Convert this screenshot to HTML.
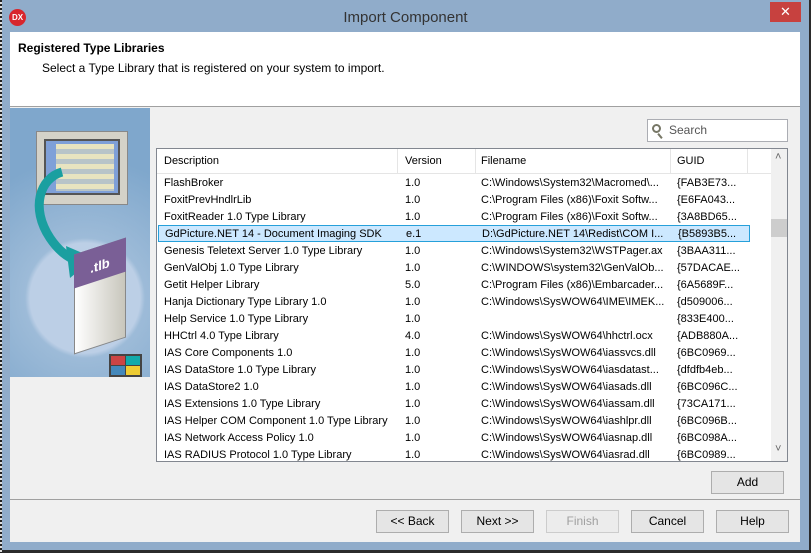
<!DOCTYPE html>
<html><head><style>
*{margin:0;padding:0;box-sizing:border-box}
body{width:811px;height:553px;background:#2b2b2b;position:relative;overflow:hidden;font-family:"Liberation Sans",sans-serif;font-size:11px;color:#000}
.a{position:absolute}
.btn{position:absolute;height:23px;border:1px solid #adadad;background:#e5e5e5;text-align:center;line-height:21px;font-size:12px}
.row{position:absolute;left:0;height:17px;line-height:18px;white-space:nowrap;width:614px}
.row span{position:absolute;top:0}
</style></head><body>
<div class="a" style="left:2px;top:0;width:807px;height:550px;background:#90acca"></div>
<div class="a" style="left:0;top:0;width:2px;height:553px;background:repeating-linear-gradient(#222 0 2px,#ddd 2px 4px)"></div>
<div class="a" style="left:9px;top:9px;width:17px;height:17px;border-radius:50%;background:#d8262d;color:#fff;font-size:8px;font-weight:bold;text-align:center;line-height:17px">DX</div>
<div class="a" style="left:0;top:9px;width:811px;text-align:center;font-size:15px;color:#333">Import Component</div>
<div class="a" style="left:770px;top:2px;width:31px;height:20px;background:#c7413f;color:#fff;text-align:center;font-size:13px;line-height:20px">✕</div>
<div class="a" style="left:10px;top:32px;width:790px;height:510px;background:#f0f0f0"></div>
<div class="a" style="left:10px;top:32px;width:790px;height:75px;background:#fff;border-bottom:1px solid #a0a0a0"></div>
<div class="a" style="left:18px;top:41px;font-weight:bold;font-size:12px">Registered Type Libraries</div>
<div class="a" style="left:42px;top:61px;font-size:12px">Select a Type Library that is registered on your system to import.</div>
<div class="a" style="left:10px;top:108px;width:140px;height:269px;overflow:hidden;background:radial-gradient(circle at 75px 190px,#bccfe6 0 55px,#9dbbd8 60px,#7fa7cc 140px)">
  <div class="a" style="left:26px;top:23px;width:92px;height:74px;background:#d4d2c8;border:1px solid #888"></div>
  <div class="a" style="left:34px;top:31px;width:76px;height:56px;background:#7fa0d8;border:2px solid #555"></div>
  <div class="a" style="left:46px;top:36px;width:58px;height:47px;background:repeating-linear-gradient(#e8e4c0 0 5px,#b8c4c8 5px 10px)"></div>
  <svg class="a" style="left:0;top:0" width="140" height="269"><path d="M52 64 C30 70,20 100,40 130 C48 142,58 150,66 152" fill="none" stroke="#1a9fa0" stroke-width="9"/><path d="M56 138 L84 150 L60 170 Z" fill="#1a9fa0"/></svg>
  <div class="a" style="left:64px;top:138px;width:52px;height:100px;background:linear-gradient(90deg,#fff,#c8c6bc);transform:skewY(-18deg);border:1px solid #888"></div>
  <div class="a" style="left:64px;top:138px;width:52px;height:34px;background:#7a5f96;transform:skewY(-18deg);color:#fff;font-size:13px;font-weight:bold;text-align:center;line-height:40px">.tlb</div>
  <div class="a" style="left:99px;top:246px;width:33px;height:23px;background:#444;padding:2px;display:grid;grid-template-columns:1fr 1fr;gap:1px"><i style="background:#c44"></i><i style="background:#1aa"></i><i style="background:#48b"></i><i style="background:#ec3"></i></div>
</div>
<div class="a" style="left:647px;top:119px;width:141px;height:23px;background:#fff;border:1px solid #abadb3;font-size:12px;color:#555;line-height:21px;padding-left:21px">Search<span class="a" style="left:4px;top:4px;width:9px;height:9px;border:2px solid #776;border-radius:50%"></span><span class="a" style="left:11px;top:13px;width:2px;height:6px;background:#776;transform:rotate(-40deg)"></span></div>
<div class="a" style="left:156px;top:148px;width:632px;height:314px;background:#fff;border:1px solid #828790;overflow:hidden">
  <div class="a" style="left:0;top:0;width:614px;height:25px;border-bottom:1px solid #e5e5e5;line-height:24px">
    <span class="a" style="left:7px">Description</span><span class="a" style="left:248px">Version</span><span class="a" style="left:324px">Filename</span><span class="a" style="left:520px">GUID</span>
    <i class="a" style="left:240px;top:0;width:1px;height:25px;background:#e5e5e5"></i><i class="a" style="left:318px;top:0;width:1px;height:25px;background:#e5e5e5"></i><i class="a" style="left:513px;top:0;width:1px;height:25px;background:#e5e5e5"></i><i class="a" style="left:590px;top:0;width:1px;height:25px;background:#e5e5e5"></i>
  </div>
  <div class="a" style="left:614px;top:0;width:17px;height:312px;background:#f0f0f0"><div class="a" style="left:0;top:70px;width:16px;height:18px;background:#cdcdcd"></div><span class="a" style="left:4px;top:2px;color:#666">˄</span><span class="a" style="left:4px;top:294px;color:#666">˅</span></div>
  <div style="position:absolute;left:0;top:25px;width:614px">
  <div class="row" style="top:0"><span style="left:7px">FlashBroker</span><span style="left:248px">1.0</span><span style="left:324px">C:\Windows\System32\Macromed\...</span><span style="left:520px">{FAB3E73...</span></div>
  <div class="row" style="top:17px"><span style="left:7px">FoxitPrevHndlrLib</span><span style="left:248px">1.0</span><span style="left:324px">C:\Program Files (x86)\Foxit Softw...</span><span style="left:520px">{E6FA043...</span></div>
  <div class="row" style="top:34px"><span style="left:7px">FoxitReader 1.0 Type Library</span><span style="left:248px">1.0</span><span style="left:324px">C:\Program Files (x86)\Foxit Softw...</span><span style="left:520px">{3A8BD65...</span></div>
  <div class="row" style="top:51px;background:#cce8ff;border:1px solid #26a0da;width:592px;left:1px;line-height:16px"><span style="left:6px">GdPicture.NET 14 - Document Imaging SDK</span><span style="left:247px">e.1</span><span style="left:323px">D:\GdPicture.NET 14\Redist\COM I...</span><span style="left:519px">{B5893B5...</span></div>
  <div class="row" style="top:68px"><span style="left:7px">Genesis Teletext Server 1.0 Type Library</span><span style="left:248px">1.0</span><span style="left:324px">C:\Windows\System32\WSTPager.ax</span><span style="left:520px">{3BAA311...</span></div>
  <div class="row" style="top:85px"><span style="left:7px">GenValObj 1.0 Type Library</span><span style="left:248px">1.0</span><span style="left:324px">C:\WINDOWS\system32\GenValOb...</span><span style="left:520px">{57DACAE...</span></div>
  <div class="row" style="top:102px"><span style="left:7px">Getit Helper Library</span><span style="left:248px">5.0</span><span style="left:324px">C:\Program Files (x86)\Embarcader...</span><span style="left:520px">{6A5689F...</span></div>
  <div class="row" style="top:119px"><span style="left:7px">Hanja Dictionary Type Library 1.0</span><span style="left:248px">1.0</span><span style="left:324px">C:\Windows\SysWOW64\IME\IMEK...</span><span style="left:520px">{d509006...</span></div>
  <div class="row" style="top:136px"><span style="left:7px">Help Service 1.0 Type Library</span><span style="left:248px">1.0</span><span style="left:520px">{833E400...</span></div>
  <div class="row" style="top:153px"><span style="left:7px">HHCtrl 4.0 Type Library</span><span style="left:248px">4.0</span><span style="left:324px">C:\Windows\SysWOW64\hhctrl.ocx</span><span style="left:520px">{ADB880A...</span></div>
  <div class="row" style="top:170px"><span style="left:7px">IAS Core Components 1.0</span><span style="left:248px">1.0</span><span style="left:324px">C:\Windows\SysWOW64\iassvcs.dll</span><span style="left:520px">{6BC0969...</span></div>
  <div class="row" style="top:187px"><span style="left:7px">IAS DataStore 1.0 Type Library</span><span style="left:248px">1.0</span><span style="left:324px">C:\Windows\SysWOW64\iasdatast...</span><span style="left:520px">{dfdfb4eb...</span></div>
  <div class="row" style="top:204px"><span style="left:7px">IAS DataStore2 1.0</span><span style="left:248px">1.0</span><span style="left:324px">C:\Windows\SysWOW64\iasads.dll</span><span style="left:520px">{6BC096C...</span></div>
  <div class="row" style="top:221px"><span style="left:7px">IAS Extensions 1.0 Type Library</span><span style="left:248px">1.0</span><span style="left:324px">C:\Windows\SysWOW64\iassam.dll</span><span style="left:520px">{73CA171...</span></div>
  <div class="row" style="top:238px"><span style="left:7px">IAS Helper COM Component 1.0 Type Library</span><span style="left:248px">1.0</span><span style="left:324px">C:\Windows\SysWOW64\iashlpr.dll</span><span style="left:520px">{6BC096B...</span></div>
  <div class="row" style="top:255px"><span style="left:7px">IAS Network Access Policy 1.0</span><span style="left:248px">1.0</span><span style="left:324px">C:\Windows\SysWOW64\iasnap.dll</span><span style="left:520px">{6BC098A...</span></div>
  <div class="row" style="top:272px"><span style="left:7px">IAS RADIUS Protocol 1.0 Type Library</span><span style="left:248px">1.0</span><span style="left:324px">C:\Windows\SysWOW64\iasrad.dll</span><span style="left:520px">{6BC0989...</span></div>
  </div>
</div>
<div class="btn" style="left:711px;top:471px;width:73px">Add</div>
<div class="a" style="left:10px;top:499px;width:790px;height:1px;background:#a0a0a0"></div>
<div class="btn" style="left:376px;top:510px;width:73px">&lt;&lt; Back</div>
<div class="btn" style="left:461px;top:510px;width:73px">Next &gt;&gt;</div>
<div class="btn" style="left:546px;top:510px;width:73px;color:#a0a0a0;border-color:#ccc;background:#ececec">Finish</div>
<div class="btn" style="left:631px;top:510px;width:73px">Cancel</div>
<div class="btn" style="left:716px;top:510px;width:73px">Help</div>
</body></html>
